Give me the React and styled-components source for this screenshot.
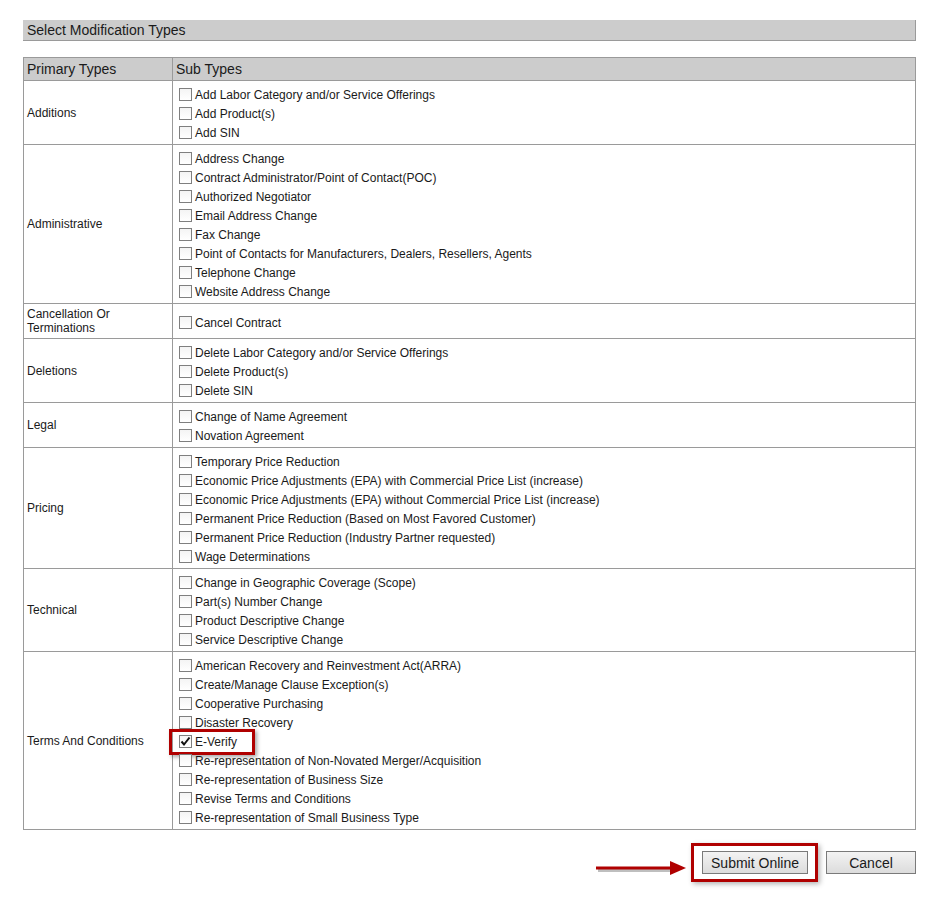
import React from "react";
import styled, { createGlobalStyle } from "styled-components";

const GlobalStyle = createGlobalStyle`
  body {
    margin: 0;
    background: #fff;
    font-family: "Liberation Sans", Arial, sans-serif;
    color: #1a1a1a;
  }
`;

function ModificationTypes() {
  const groups = [
    {
      name: "Additions",
      items: [
        "Add Labor Category and/or Service Offerings",
        "Add Product(s)",
        "Add SIN",
      ],
    },
    {
      name: "Administrative",
      items: [
        "Address Change",
        "Contract Administrator/Point of Contact(POC)",
        "Authorized Negotiator",
        "Email Address Change",
        "Fax Change",
        "Point of Contacts for Manufacturers, Dealers, Resellers, Agents",
        "Telephone Change",
        "Website Address Change",
      ],
    },
    { name: "Cancellation Or Terminations", items: ["Cancel Contract"] },
    {
      name: "Deletions",
      items: [
        "Delete Labor Category and/or Service Offerings",
        "Delete Product(s)",
        "Delete SIN",
      ],
    },
    {
      name: "Legal",
      items: ["Change of Name Agreement", "Novation Agreement"],
    },
    {
      name: "Pricing",
      items: [
        "Temporary Price Reduction",
        "Economic Price Adjustments (EPA) with Commercial Price List (increase)",
        "Economic Price Adjustments (EPA) without Commercial Price List (increase)",
        "Permanent Price Reduction (Based on Most Favored Customer)",
        "Permanent Price Reduction (Industry Partner requested)",
        "Wage Determinations",
      ],
    },
    {
      name: "Technical",
      items: [
        "Change in Geographic Coverage (Scope)",
        "Part(s) Number Change",
        "Product Descriptive Change",
        "Service Descriptive Change",
      ],
    },
    {
      name: "Terms And Conditions",
      items: [
        "American Recovery and Reinvestment Act(ARRA)",
        "Create/Manage Clause Exception(s)",
        "Cooperative Purchasing",
        "Disaster Recovery",
        "E-Verify",
        "Re-representation of Non-Novated Merger/Acquisition",
        "Re-representation of Business Size",
        "Revise Terms and Conditions",
        "Re-representation of Small Business Type",
      ],
    },
  ];

  const checked = "E-Verify";

  return (
    <Page>
      <GlobalStyle />
      <SectionBar>Select Modification Types</SectionBar>
      <Table>
        <thead>
          <tr>
            <HeadCell $first>Primary Types</HeadCell>
            <HeadCell>Sub Types</HeadCell>
          </tr>
        </thead>
        <tbody>
          {groups.map((g) => (
            <tr key={g.name}>
              <PrimaryCell>{g.name}</PrimaryCell>
              <SubCell>
                {g.items.map((item) => (
                  <Option key={item}>
                    <Box>
                      {item === checked && (
                        <svg width="11" height="11" viewBox="0 0 11 11">
                          <path
                            d="M1.5 5.5 L4 8.5 L9.5 1.5"
                            fill="none"
                            stroke="#111"
                            strokeWidth="2"
                          />
                        </svg>
                      )}
                    </Box>
                    {item}
                    {item === checked && <Highlight />}
                  </Option>
                ))}
              </SubCell>
            </tr>
          ))}
        </tbody>
      </Table>
      <Actions>
        <svg width="92" height="16" viewBox="0 0 92 16">
          <line x1="2" y1="10" x2="78" y2="10" stroke="rgba(0,0,0,0.25)" strokeWidth="4" />
          <line x1="0" y1="8" x2="76" y2="8" stroke="#b00000" strokeWidth="3" />
          <polygon points="74,1 90,8 74,15" fill="#b00000" />
        </svg>
        <Framed>
          <Button>Submit Online</Button>
        </Framed>
        <Button $wide>Cancel</Button>
      </Actions>
    </Page>
  );
}

export default ModificationTypes;

const Page = styled.div`
  width: 893px;
  padding: 20px 19px 20px 23px;
`;

const SectionBar = styled.div`
  height: 20px;
  line-height: 20px;
  padding-left: 4px;
  background: #cccccc;
  border-bottom: 1px solid #9a9a9a;
  border-right: 1px solid #9a9a9a;
  font-size: 14px;
  color: #1a1a1a;
`;

const Table = styled.table`
  width: 100%;
  margin-top: 16px;
  border-collapse: collapse;
  border: 1px solid #9a9a9a;
`;

const HeadCell = styled.th`
  width: ${(p) => (p.$first ? "142px" : "auto")};
  height: 22px;
  padding: 0 3px;
  background: #cccccc;
  border: 1px solid #9a9a9a;
  text-align: left;
  font-weight: normal;
  font-size: 14px;
  line-height: 22px;
`;

const PrimaryCell = styled.td`
  padding: 3px 3px;
  border: 1px solid #9a9a9a;
  vertical-align: middle;
  font-size: 12px;
  line-height: 14px;
`;

const SubCell = styled.td`
  padding: 5px 6px 1px;
  border: 1px solid #9a9a9a;
  font-size: 12px;
`;

const Option = styled.div`
  position: relative;
  display: flex;
  align-items: center;
  gap: 3px;
  height: 19px;
  line-height: 19px;
  white-space: nowrap;
`;

const Box = styled.span`
  box-sizing: border-box;
  display: flex;
  align-items: center;
  justify-content: center;
  width: 13px;
  height: 13px;
  margin-top: -2px;
  border: 1px solid #7f7f7f;
  background: linear-gradient(#f4f4f4, #ffffff);
`;

const Highlight = styled.span`
  position: absolute;
  left: -10px;
  top: -4px;
  width: 80px;
  height: 20px;
  border: 3px solid #b00000;
  box-shadow: 2px 2px 4px rgba(0, 0, 0, 0.35);
  pointer-events: none;
`;

const Actions = styled.div`
  display: flex;
  align-items: center;
  justify-content: flex-end;
  gap: 8px;
  margin-top: 13px;

  svg {
    margin-top: 10px;
    margin-right: -5px;
  }
`;

const Framed = styled.div`
  padding: 5px 7px 5px 8px;
  border: 3px solid #b00000;
  box-shadow: 2px 2px 5px rgba(0, 0, 0, 0.3);
`;

const Button = styled.button`
  width: ${(p) => (p.$wide ? "90px" : "106px")};
  height: 23px;
  padding: 0;
  border: 1px solid #7a7a7a;
  background: linear-gradient(#f3f3f3, #dcdcdc);
  font-family: "Liberation Sans", Arial, sans-serif;
  font-size: 14px;
  color: #1a1a1a;
`;
